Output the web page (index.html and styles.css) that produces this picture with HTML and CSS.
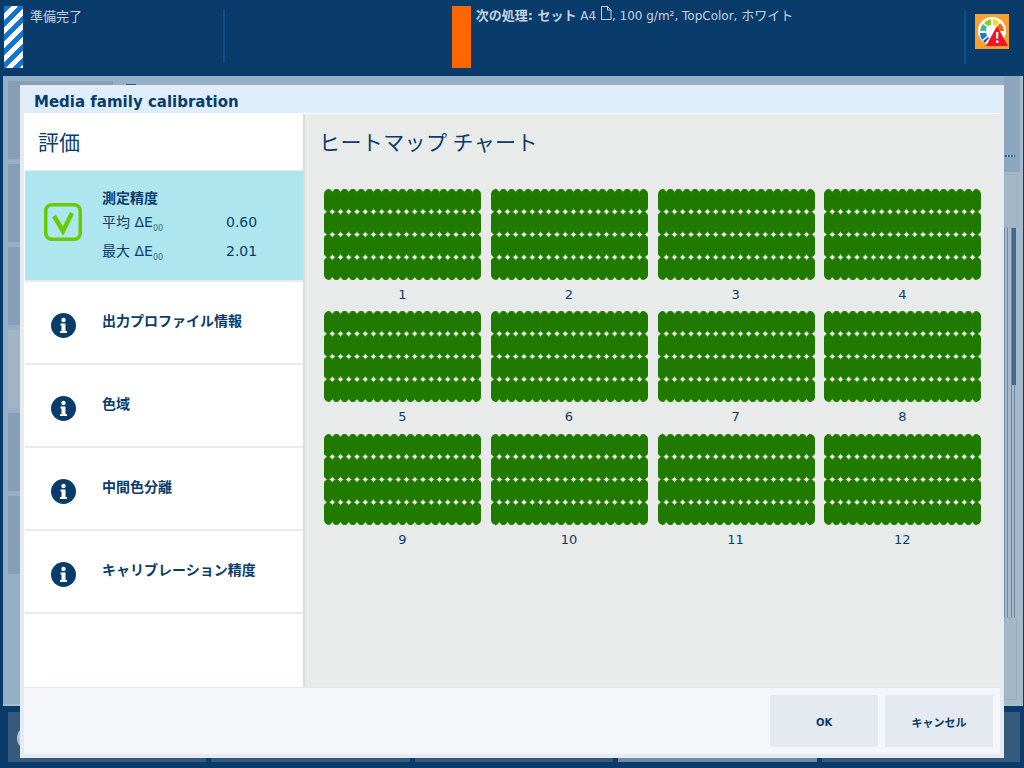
FILE: index.html
```html
<!DOCTYPE html>
<html lang="ja">
<head>
    <meta charset="UTF-8">
    <meta name="viewport" content="width=device-width, initial-scale=1.0">
    <title>Media family calibration</title>
    <link rel="stylesheet" href="styles.css">
</head>
<body>
    <header class="status-bar">
        <div class="stripes"></div>
        <div class="status-text">準備完了</div>
        <div class="status-divider"></div>
        <div class="next-marker"></div>
        <div class="next-text">
            <b>次の処理: セット</b> A4
            <svg class="page-icon" width="12" height="15" viewBox="0 0 12 15"><path d="M1.5 .5h6l3.5 3.5v9.5h-9.5zM7.5 .5v3.5h3.5" fill="none" stroke="#c5d3e0"/></svg>, 100 g/m², TopColor, <span class="kana">ホワイト</span>
        </div>
        <div class="status-divider right"></div>
        <div class="gauge-tile">
            <svg width="34" height="35" viewBox="0 0 34 35">
                <circle cx="17" cy="17" r="14" fill="#fff"/>
                <path d="M5 17a12 12 0 0 1 3-7l4 3a7 7 0 0 0-1 4z" fill="#47b78f"/>
                <path d="M9 9a12 12 0 0 1 7-4v6a7 7 0 0 0-3 1z" fill="#7ed321"/>
                <path d="M18 5a12 12 0 0 1 6 3l-3 4a7 7 0 0 0-3-1z" fill="#f0e010"/>
                <path d="M25 9a12 12 0 0 1 4 8h-6a7 7 0 0 0-1-4z" fill="#f5660a"/>
                <path d="M5 19h6l1 3-5 4a12 12 0 0 1-2-7z" fill="#1e78d2"/>
                <path d="M8 27l5-4 1 1-4 5z" fill="#2b4fa8"/>
                <path d="M22 12l11 20h-22z" fill="#f01428"/>
                <path d="M21 18h2.4l-.3 7h-1.8zM21 26.500h2.400v2.500h-2.400z" fill="#fff"/>
            </svg>
        </div>
    </header>

    <main class="app">
        <div class="app-tiles">
            <div class="app-tile"></div>
            <div class="app-tile"></div>
            <div class="app-tile"></div>
            <div class="app-tile light"></div>
            <div class="app-tile"></div>
            <div class="app-tile"></div>
        </div>
        <div class="app-mark"></div>
        <div class="app-side">
            <div class="side-panel"><span class="side-dots"></span></div>
            <div class="side-box"></div>
            <div class="scroll-track">
                <div class="scroll-thumb"></div>
            </div>
            <div class="side-box bottom"></div>
        </div>
    </main>

    <footer class="dock">
        <div class="dock-tile"><span class="dock-globe"></span></div>
        <div class="dock-tile"></div>
        <div class="dock-tile"></div>
        <div class="dock-tile active"></div>
        <div class="dock-tile"></div>
    </footer>

    <section class="dialog">
        <h1 class="dialog-title">Media family calibration</h1>
        <div class="dialog-body">
            <aside class="sidebar">
                <h2 class="sidebar-head">評価</h2>
                <div class="side-item selected">
                    <svg class="side-icon check" width="38" height="38" viewBox="0 0 38 38">
                        <rect x="1.750" y="1.750" width="34.500" height="34.500" rx="6" fill="none" stroke="#66cc00" stroke-width="3.500"/>
                        <path d="M10 13l9 15 9-18" fill="none" stroke="#66cc00" stroke-width="4.500"/>
                    </svg>
                    <div class="side-text">
                        <div class="side-title">測定精度</div>
                        <div class="metric"><span class="metric-name">平均 ΔE<sub>00</sub></span><span>0.60</span></div>
                        <div class="metric"><span class="metric-name">最大 ΔE<sub>00</sub></span><span>2.01</span></div>
                    </div>
                </div>
                <div class="side-item">
                    <svg class="side-icon" width="25" height="25" viewBox="0 0 25 25"><use href="#info"/></svg>
                    <div class="side-title">出力プロファイル情報</div>
                </div>
                <div class="side-item">
                    <svg class="side-icon" width="25" height="25" viewBox="0 0 25 25"><use href="#info"/></svg>
                    <div class="side-title">色域</div>
                </div>
                <div class="side-item">
                    <svg class="side-icon" width="25" height="25" viewBox="0 0 25 25"><use href="#info"/></svg>
                    <div class="side-title">中間色分離</div>
                </div>
                <div class="side-item">
                    <svg class="side-icon" width="25" height="25" viewBox="0 0 25 25"><use href="#info"/></svg>
                    <div class="side-title">キャリブレーション精度</div>
                </div>
            </aside>
            <div class="charts">
                <h2 class="charts-head">ヒートマップ チャート</h2>
                <div class="chart-grid">
                    <div class="chart"><div class="patches"></div><span>1</span></div>
                    <div class="chart"><div class="patches"></div><span>2</span></div>
                    <div class="chart"><div class="patches"></div><span>3</span></div>
                    <div class="chart"><div class="patches"></div><span>4</span></div>
                    <div class="chart"><div class="patches"></div><span>5</span></div>
                    <div class="chart"><div class="patches"></div><span>6</span></div>
                    <div class="chart"><div class="patches"></div><span>7</span></div>
                    <div class="chart"><div class="patches"></div><span>8</span></div>
                    <div class="chart"><div class="patches"></div><span>9</span></div>
                    <div class="chart"><div class="patches"></div><span>10</span></div>
                    <div class="chart"><div class="patches"></div><span>11</span></div>
                    <div class="chart"><div class="patches"></div><span>12</span></div>
                </div>
            </div>
        </div>
        <div class="dialog-footer">
            <button class="dialog-button ok">OK</button>
            <button class="dialog-button">キャンセル</button>
        </div>
    </section>

    <svg class="icon-defs" width="0" height="0">
        <symbol id="info" viewBox="0 0 25 25">
            <circle cx="12.500" cy="12.500" r="12.500" fill="#0a3c6b"/>
            <circle cx="12.500" cy="7" r="2.200" fill="#fff"/>
            <path d="M9.500 10.500h5v7.500h1.500v2h-7v-2h1.500v-5.500h-1z" fill="#fff"/>
        </symbol>
    </svg>
</body>
</html>
```

FILE: styles.css
```css
body, html {
    margin: 0;
    padding: 0;
    width: 100%;
    height: 100%;
    overflow: hidden;
}
body {
    position: relative;
    display: flex;
    flex-direction: column;
    background: #0a3c6b;
    color: #0a3c6b;
    font-family: "DejaVu Sans", "Noto Sans CJK JP", sans-serif;
}
h1, h2 {
    margin: 0;
    font-weight: normal;
}

/* top status bar */
.status-bar {
    height: 76px;
    flex: none;
    display: flex;
    align-items: flex-start;
    box-sizing: border-box;
    padding: 6px 15px 0 4px;
    color: #c5d3e0;
    font-size: 12px;
}
.stripes {
    width: 19px;
    height: 62px;
    background: repeating-linear-gradient(135deg, #1275d0 0, #1275d0 5px, #fff 5px, #fff 10px);
}
.status-text {
    width: 193px;
    margin: 3px 0 0 7px;
    font-family: "Noto Sans CJK JP", sans-serif;
    font-size: 13px;
    line-height: 14px;
}
.status-divider {
    width: 2px;
    height: 54px;
    margin-top: 3px;
    background: #0c4f8a;
}
.status-divider.right {
    margin: 4px 9px 0 0;
}
.next-marker {
    width: 19px;
    height: 62px;
    margin-left: 227px;
    background: #ff6600;
}
.next-text {
    width: 489px;
    margin: 0 0 0 5px;
    line-height: 16px;
    white-space: nowrap;
}
.next-text b, .kana {
    font-size: 13px;
}
.page-icon {
    vertical-align: -1px;
}
.gauge-tile {
    width: 34px;
    height: 35px;
    margin-top: 8px;
    background: #f7a030;
}

/* application behind the dialog */
.app {
    height: 630px;
    flex: none;
    display: flex;
    box-sizing: border-box;
    margin: 0 1px 0 3px;
    padding: 5px 0 0 5px;
    background: #94b0c6;
    border-bottom: 2px solid #a8bccc;
}
.app-tiles {
    width: 105px;
    display: flex;
    flex-direction: column;
    gap: 5px;
}
.app-tile {
    height: 78px;
    background: #869fb6;
}
.app-tile.light {
    background: #a3b5c4;
}
.app-mark {
    width: 10px;
    height: 2px;
    margin: 3px 0 0 13px;
    background: #1d5f9e;
}
.app-side {
    width: 19px;
    margin: -5px 0 0 auto;
    display: flex;
    flex-direction: column;
    background: #a5b9c8;
}
.side-panel {
    height: 96px;
    box-sizing: border-box;
    padding-top: 79px;
    margin-right: 3px;
    background: #8ba6bd;
}
.side-dots {
    display: block;
    width: 10px;
    height: 2px;
    margin-left: 1px;
    background: repeating-linear-gradient(90deg, #1d5f9e 0, #1d5f9e 2px, #c5d3e0 2px, #c5d3e0 3px);
}
.side-box {
    height: 54px;
    margin: 2px 5px 0 0;
    box-sizing: border-box;
    border: 1px solid #98aec0;
    background: #a3b7c6;
}
.side-box.bottom {
    height: 83px;
    margin-top: 0;
    margin-right: 6px;
}
.scroll-track {
    height: 389px;
    background: repeating-linear-gradient(90deg, #6d8aa5 0, #6d8aa5 1px, transparent 1px, transparent 3.333px);
    background-size: 12px 100%;
    background-repeat: no-repeat;
}
.scroll-thumb {
    width: 4px;
    height: 157px;
    margin-left: 8px;
    background: #44688f;
}
.dock {
    flex: 1;
    display: flex;
    gap: 5px;
    padding: 6px 4px 6px 8px;
}
.dock-tile {
    flex: 1;
    background: #365a7c;
}
.dock-tile.active {
    background: #6f8aa3;
}
.dock-globe {
    display: block;
    width: 24px;
    height: 24px;
    margin: 14px 0 0 9px;
    border-radius: 50%;
    background: #b4c5d6;
}

/* dialog */
.dialog {
    position: absolute;
    left: 20px;
    top: 85px;
    width: 984px;
    height: 673px;
    box-sizing: border-box;
    border: 4px solid #e6ebf3;
    display: flex;
    flex-direction: column;
    background: #f4f6f9;
}
.dialog-title {
    height: 24px;
    flex: none;
    box-sizing: border-box;
    padding-left: 10px;
    background: #dfeefc;
    font-size: 15px;
    font-weight: bold;
    line-height: 27px;
}
.dialog-body {
    height: 575px;
    flex: none;
    display: flex;
    box-sizing: border-box;
    border-top: 1px solid #fff;
    border-bottom: 1px solid #e3e8f0;
}
.sidebar {
    width: 281px;
    flex: none;
    box-sizing: border-box;
    background: #fff;
    border-right: 2px solid #d9dbdc;
}
.sidebar-head {
    height: 56px;
    padding-left: 14px;
    font-size: 21px;
    font-family: "Noto Sans CJK JP", sans-serif;
    line-height: 54px;
}
.side-item {
    height: 83px;
    display: flex;
    align-items: center;
    box-sizing: border-box;
    margin-left: 1px;
    padding-left: 26px;
    border-bottom: 2px solid #e8eaeb;
}
.side-item.selected {
    height: 112px;
    padding-left: 19px;
    border-top: 1px solid #e8eaeb;
    background: #ade6ef;
    background-clip: padding-box;
}
.side-icon {
    flex: none;
    margin: 6px 26px 0 0;
}
.side-icon.check {
    margin: 0 20px 8px 0;
}
.side-title {
    margin-top: -6px;
    font-size: 14px;
    font-weight: bold;
    line-height: 18px;
    font-family: "Noto Sans CJK JP", sans-serif;
}
.selected .side-title {
    margin: 0 0 1px;
}
.side-text {
    flex: 1;
    margin-top: 2px;
}
.metric {
    display: flex;
    height: 29px;
    font-size: 14px;
    line-height: 30px;
}
.metric-name {
    width: 124px;
}
.metric sub {
    font-size: 8px;
    line-height: 0;
    opacity: .75;
}
.charts {
    flex: 1;
    background: #e9ebea;
    padding-left: 14px;
}
.charts-head {
    height: 74.8px;
    font-size: 21px;
    letter-spacing: .4px;
    font-family: "Noto Sans CJK JP", sans-serif;
    line-height: 54px;
}
.chart-grid {
    display: grid;
    grid-template-columns: repeat(4, 157px);
    grid-auto-rows: 122.5px;
    justify-content: space-between;
    width: 657px;
    margin-left: 5.3px;
}
.chart {
    font-size: 13px;
    text-align: center;
    line-height: 30px;
}
.chart span {
    display: block;
    padding-right: 1px;
}
/* 19 x 4 measured patches, white specks where the corners meet */
.patches {
    height: 91px;
    border-radius: 5px;
    background-color: #217a00;
    background-image:
        radial-gradient(ellipse 3.500px 1.200px at center, #fff 30%, rgba(255, 255, 255, 0) 100%),
        radial-gradient(ellipse 1.200px 3.500px at center, #fff 30%, rgba(255, 255, 255, 0) 100%),
        radial-gradient(circle 2.200px at center, #fff 50%, rgba(255, 255, 255, 0) 100%);
    background-size: 8.26px 22.75px;
    background-position: -4.13px -11.375px;
}
.dialog-footer {
    flex: 1;
    display: flex;
    justify-content: flex-end;
    gap: 7px;
    padding: 7px 7px 7px 0;
}
.dialog-button {
    width: 108px;
    border: 0;
    padding: 2px 0 0;
    background: #e5eaf1;
    color: #0a3c6b;
    font-family: "DejaVu Sans", "Noto Sans CJK JP", sans-serif;
    font-size: 11px;
    font-weight: bold;
}
.dialog-button.ok {
    font-size: 10px;
}
.icon-defs {
    position: absolute;
}
```
